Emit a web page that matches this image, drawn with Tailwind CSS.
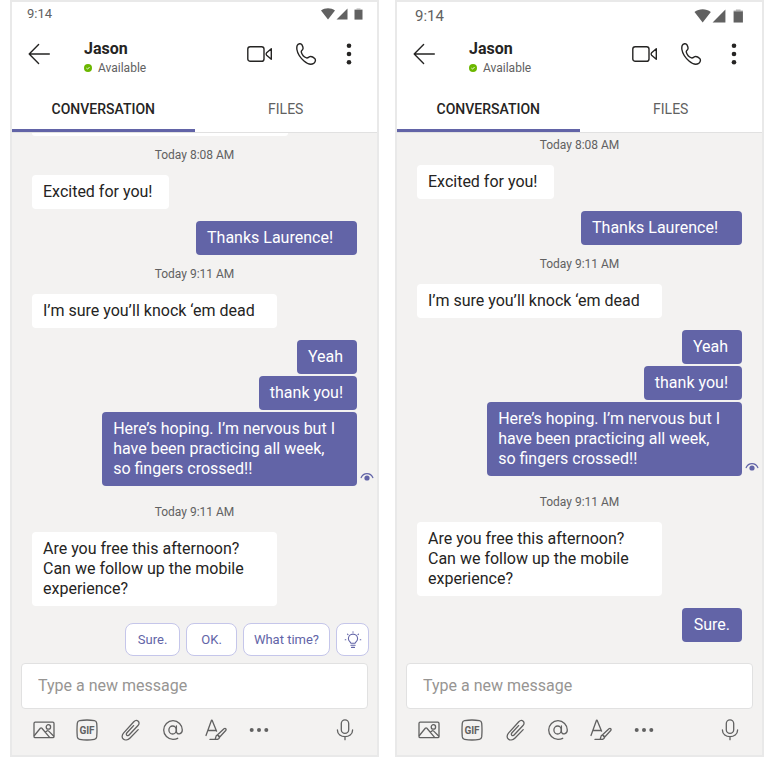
<!DOCTYPE html>
<html lang="en">
  <head>
    <meta charset="UTF-8" />
    <meta name="viewport" content="width=device-width, initial-scale=1" />
    <title>Chat with Jason</title>
    <script src="https://cdn.jsdelivr.net/npm/@tailwindcss/browser@4"></script>
  </head>
  <body class="bg-white font-['Roboto',sans-serif] text-base text-[#252423]">
    <!-- Icons shared by both phones -->
    <svg class="hidden">
      <symbol id="i-status" viewBox="0 0 42 12">
        <path fill="currentColor" d="M0 2.6C4 -.6 10 -.6 14 2.6L7 11.6zM26.5 .4V11.6H15.5z" />
        <path fill="currentColor" d="M33.5 2h8v9.600h-8z" />
        <path fill="currentColor" opacity=".5" d="M33.500 2V1.200h2V.4h4v.8h2V2z" />
      </symbol>
      <symbol id="i-back" viewBox="0 0 22 22" fill="none" stroke="currentColor" stroke-width="1.4" stroke-linecap="round" stroke-linejoin="round">
        <path d="M21.3 11H1.2M10.6 1.6 1.2 11l9.4 9.4" />
      </symbol>
      <symbol id="i-video" viewBox="0 0 26 22" fill="none" stroke="currentColor" stroke-width="1.4" stroke-linejoin="round">
        <rect x=".8" y="3.7" width="16.2" height="14.6" rx="2.4" />
        <path d="M24.3 5.8v10.4L19.6 12.2q-1-1.2 0-2.4z" />
      </symbol>
      <symbol id="i-phone" viewBox="0 0 24 24" fill="none" stroke="currentColor" stroke-width="1.4" stroke-linejoin="round">
        <path d="M4.200 3.600C5 1.600 8 .9 9 2.800c.8 1.500 1.400 3.300.8 4.400-.6 1.200-1.800 1.500-1.500 2.900.6 2.300 3 5 5.200 5.800 1.500.4 2-.8 3.300-1.200 1.700-.5 3.700.7 4.900 1.900 1.400 1.400.5 3.800-1 4.800-2.700 1.700-6.300.6-9.700-2.400C7.300 15.700 4.500 11.200 3.900 7.500c-.2-1.500-.1-2.800.3-3.900z" />
      </symbol>
      <symbol id="i-more-v" viewBox="0 0 24 24" fill="currentColor">
        <circle cx="12" cy="3.700" r="2.300" /><circle cx="12" cy="12" r="2.300" /><circle cx="12" cy="20.300" r="2.300" />
      </symbol>
      <symbol id="i-available" viewBox="0 0 8 8" fill="none">
        <circle cx="4" cy="4" r="4" fill="#6bb700" />
        <path stroke="#fff" stroke-width=".9" d="M2.400 4.100l1.100 1 2.100-2.100" />
      </symbol>
      <symbol id="i-seen" viewBox="0 0 14 10" fill="none">
        <path stroke="currentColor" stroke-width="1.300" stroke-linecap="round" d="M1.200 5.600C3.400.4 10.600.4 12.800 5.600" />
        <circle cx="7" cy="6" r="2.600" fill="currentColor" />
      </symbol>
      <symbol id="i-bulb" viewBox="0 0 18 18" fill="none" stroke="currentColor" stroke-width="1.100" stroke-linecap="round">
        <path d="M7 12.300C6.600 11 4.400 10.200 4.400 7.700a4.600 4.600 0 0 1 9.200 0c0 2.500-2.200 3.300-2.600 4.600zM6.900 14.300h4.200M7.500 16.400h3M9 .8v.4M3.500 3.200l.5.500M14.500 3.200l-.5.500M1.200 8.700h.6M16.200 8.700h.6" />
      </symbol>
      <symbol id="i-image" viewBox="0 0 22 22" fill="none" stroke="currentColor" stroke-width="1.300" stroke-linecap="round">
        <rect x="1" y="3.200" width="20" height="15.400" rx="1.200" />
        <path d="M1.400 16.500 7.300 9.300q.8-.8 1.600 0l7.700 9M12.300 13.300l1.600-1.400q.8-.6 1.600 0l5.100 5.100" />
        <circle cx="15.400" cy="7.900" r="2.200" />
      </symbol>
      <symbol id="i-gif" viewBox="0 0 22 22" fill="none">
        <path stroke="currentColor" stroke-width="1.300" d="M3.600 1.700Q11 .3 18.400 1.700q2 .4 2.300 2.400.6 6.900 0 13.800-.3 2-2.300 2.400-7.400 1.400-14.800 0-2-.4-2.300-2.400-.6-6.900 0-13.800.3-2 2.300-2.400z" />
        <text x="11" y="14.600" text-anchor="middle" fill="currentColor" font-size="10" font-weight="700">GIF</text>
      </symbol>
      <symbol id="i-clip" viewBox="0 0 22 22" fill="none" stroke="currentColor" stroke-width="1.300" stroke-linecap="round">
        <path d="M19.200 10.600 10.800 19.200c-2 2-4.900 2.300-6.500.9-1.700-1.500-1.500-4.200.4-6.200L14.800 2.800c1.400-1.500 3.300-1.600 4.400-.6 1.200 1.100 1.100 2.900-.2 4.300l-8.700 9.300c-.8.9-1.900 1-2.500.4-.7-.6-.6-1.600.2-2.500l6.600-7.100" />
      </symbol>
      <symbol id="i-at" viewBox="0 0 22 22" fill="none" stroke="currentColor" stroke-width="1.300" stroke-linecap="round">
        <ellipse cx="10.600" cy="11" rx="3.700" ry="4" />
        <path d="M14.400 7v5.600c0 3.200 5.900 3.200 5.900-1.600a9.300 9.300 0 1 0-9.300 9.300q2.800 0 4.700-1" />
      </symbol>
      <symbol id="i-format" viewBox="0 0 22 22" fill="none" stroke="currentColor" stroke-width="1.300" stroke-linecap="round" stroke-linejoin="round">
        <path d="M1 16.500 6.500 1.200h.6l4.500 11M3 11.500h7.600" />
        <path d="M12.300 15.900 19 9.700q1.100-.7 1.800.1.600.8-.1 1.700l-6.200 6.700zM12.300 15.900c1.400.2 2.100 1 2.200 2.300-.2 1.800-2.200 2.400-4.300 2.200H5M10.200 20.200c.7-1.200.2-3.800 2.100-4.300" />
      </symbol>
      <symbol id="i-more-h" viewBox="0 0 22 22" fill="currentColor">
        <circle cx="3.700" cy="11" r="2" /><circle cx="11" cy="11" r="2" /><circle cx="18.300" cy="11" r="2" />
      </symbol>
      <symbol id="i-mic" viewBox="0 0 22 22" fill="none" stroke="currentColor" stroke-width="1.300" stroke-linecap="round">
        <rect x="7.300" y=".8" width="7.400" height="13.600" rx="3.700" />
        <path d="M3.400 11c0 8.900 15.200 8.900 15.200 0M11 17.700v3" />
      </symbol>
    </svg>

    <main class="grid min-h-screen grid-cols-2 gap-4 px-2.5 pb-px">
      <!-- Phone 1: suggested replies -->
      <section class="flex flex-col border-2 border-[#e9e9e9] bg-[#f3f2f1]">
        <header class="border-b border-[#e1e1e1] bg-white">
          <div class="flex h-7 items-center justify-between pr-3.5 pb-1 pl-[15px] text-[#616161]">
            <span class="text-[13px]">9:14</span>
            <svg class="h-3 w-[42px]"><use href="#i-status" /></svg>
          </div>
          <div class="flex h-12 items-center px-4">
            <button aria-label="Back"><svg class="size-[22px]"><use href="#i-back" /></svg></button>
            <div class="mt-2 ml-[34px] flex-1">
              <h1 class="leading-5 font-bold">Jason</h1>
              <p class="flex items-center gap-1.5 text-xs leading-[18px] text-[#616161]">
                <svg class="size-2"><use href="#i-available" /></svg>Available
              </p>
            </div>
            <div class="flex items-center gap-5">
              <button aria-label="Video call"><svg class="h-[22px] w-[26px]"><use href="#i-video" /></svg></button>
              <button aria-label="Call"><svg class="size-6"><use href="#i-phone" /></svg></button>
              <button aria-label="More"><svg class="size-6"><use href="#i-more-v" /></svg></button>
            </div>
          </div>
          <nav class="mt-2.5 grid h-11 grid-cols-2 text-sm">
            <button class="border-b-3 border-[#6264a7] font-medium">CONVERSATION</button>
            <button class="border-b-3 border-transparent text-[#616161]">FILES</button>
          </nav>
        </header>

        <div class="flex flex-1 flex-col px-5 leading-5">
          <div class="h-[3px] w-64 rounded-b bg-white"></div>
          <time class="mt-[11px] mb-3 text-center text-xs leading-4 text-[#616161]">Today 8:08 AM</time>
          <p class="self-start rounded bg-white py-[7px] pr-[17px] pl-[11px]">Excited for you!</p>
          <p class="mt-3 self-end rounded bg-[#6264a7] py-[7px] pr-6 pl-[11px] text-white">Thanks Laurence!</p>
          <time class="mt-[11px] mb-3 text-center text-xs leading-4 text-[#616161]">Today 9:11 AM</time>
          <p class="self-start rounded bg-white py-[7px] pr-[22px] pl-[11px]">I’m sure you’ll knock ‘em dead</p>
          <p class="mt-3 self-end rounded bg-[#6264a7] py-[7px] pr-3.5 pl-[11px] text-white">Yeah</p>
          <p class="mt-0.5 self-end rounded bg-[#6264a7] py-[7px] pr-3.5 pl-[11px] text-white">thank you!</p>
          <div class="relative mt-0.5 self-end rounded bg-[#6264a7] py-[7px] pr-[22px] pl-[11px] text-white">
            Here’s hoping. I’m nervous but I<br />have been practicing all week,<br />so fingers crossed!!
            <svg class="absolute -right-[17px] bottom-1 h-2.5 w-3.5 text-[#6264a7]"><use href="#i-seen" /></svg>
          </div>
          <time class="mt-[18px] mb-3 text-center text-xs leading-4 text-[#616161]">Today 9:11 AM</time>
          <p class="self-start rounded bg-white py-[7px] pr-[33px] pl-[11px]">Are you free this afternoon?<br />Can we follow up the mobile<br />experience?</p>
        </div>

        <div class="mt-[17px] flex justify-end gap-1.5 px-2 text-[13px] text-[#6264a7]">
          <button class="h-[33px] rounded-lg border border-[#c5c6ea] bg-white px-3">Sure.</button>
          <button class="h-[33px] rounded-lg border border-[#c5c6ea] bg-white px-3.5">OK.</button>
          <button class="h-[33px] rounded-lg border border-[#c5c6ea] bg-white px-2.5">What time?</button>
          <button aria-label="Suggestions" class="flex h-[33px] w-[33px] items-center justify-center rounded-lg border border-[#c5c6ea] bg-white">
            <svg class="size-[18px]"><use href="#i-bulb" /></svg>
          </button>
        </div>

        <footer class="mt-[7px] px-[9px]">
          <input type="text" aria-label="Message" placeholder="Type a new message" class="h-[46px] w-full rounded border border-[#e1e1e1] bg-white px-4 pb-0.5 placeholder:text-[#979593]" />
          <div class="flex h-[46px] items-center gap-[21px] pr-3 pb-1 pl-3 text-[#616161]">
            <button aria-label="Image"><svg class="size-[22px]"><use href="#i-image" /></svg></button>
            <button aria-label="GIF"><svg class="size-[22px]"><use href="#i-gif" /></svg></button>
            <button aria-label="Attach"><svg class="size-[22px]"><use href="#i-clip" /></svg></button>
            <button aria-label="Mention"><svg class="size-[22px]"><use href="#i-at" /></svg></button>
            <button aria-label="Format"><svg class="size-[22px]"><use href="#i-format" /></svg></button>
            <button aria-label="More options"><svg class="size-[22px]"><use href="#i-more-h" /></svg></button>
            <button aria-label="Record" class="ml-auto"><svg class="size-[22px]"><use href="#i-mic" /></svg></button>
          </div>
        </footer>
      </section>

      <!-- Phone 2: reply sent -->
      <section class="flex flex-col border-2 border-[#e9e9e9] bg-[#f3f2f1]">
        <header class="border-b border-[#e1e1e1] bg-white">
          <div class="flex h-7 items-center justify-between pr-[18px] pl-[18px] text-[#616161]">
            <span class="text-[15px]">9:14</span>
            <svg class="h-3.5 w-[50px]"><use href="#i-status" /></svg>
          </div>
          <div class="flex h-12 items-center px-4">
            <button aria-label="Back"><svg class="size-[22px]"><use href="#i-back" /></svg></button>
            <div class="mt-2 ml-[34px] flex-1">
              <h1 class="leading-5 font-bold">Jason</h1>
              <p class="flex items-center gap-1.5 text-xs leading-[18px] text-[#616161]">
                <svg class="size-2"><use href="#i-available" /></svg>Available
              </p>
            </div>
            <div class="flex items-center gap-5">
              <button aria-label="Video call"><svg class="h-[22px] w-[26px]"><use href="#i-video" /></svg></button>
              <button aria-label="Call"><svg class="size-6"><use href="#i-phone" /></svg></button>
              <button aria-label="More"><svg class="size-6"><use href="#i-more-v" /></svg></button>
            </div>
          </div>
          <nav class="mt-2.5 grid h-11 grid-cols-2 text-sm">
            <button class="border-b-3 border-[#6264a7] font-medium">CONVERSATION</button>
            <button class="border-b-3 border-transparent text-[#616161]">FILES</button>
          </nav>
        </header>

        <div class="flex flex-1 flex-col px-5 leading-5">
          <time class="mt-1 mb-3 text-center text-xs leading-4 text-[#616161]">Today 8:08 AM</time>
          <p class="self-start rounded bg-white py-[7px] pr-[17px] pl-[11px]">Excited for you!</p>
          <p class="mt-3 self-end rounded bg-[#6264a7] py-[7px] pr-6 pl-[11px] text-white">Thanks Laurence!</p>
          <time class="mt-[11px] mb-3 text-center text-xs leading-4 text-[#616161]">Today 9:11 AM</time>
          <p class="self-start rounded bg-white py-[7px] pr-[22px] pl-[11px]">I’m sure you’ll knock ‘em dead</p>
          <p class="mt-3 self-end rounded bg-[#6264a7] py-[7px] pr-3.5 pl-[11px] text-white">Yeah</p>
          <p class="mt-0.5 self-end rounded bg-[#6264a7] py-[7px] pr-3.5 pl-[11px] text-white">thank you!</p>
          <div class="relative mt-0.5 self-end rounded bg-[#6264a7] py-[7px] pr-[22px] pl-[11px] text-white">
            Here’s hoping. I’m nervous but I<br />have been practicing all week,<br />so fingers crossed!!
            <svg class="absolute -right-[17px] bottom-1 h-2.5 w-3.5 text-[#6264a7]"><use href="#i-seen" /></svg>
          </div>
          <time class="mt-[18px] mb-3 text-center text-xs leading-4 text-[#616161]">Today 9:11 AM</time>
          <p class="self-start rounded bg-white py-[7px] pr-[33px] pl-[11px]">Are you free this afternoon?<br />Can we follow up the mobile<br />experience?</p>
          <p class="mt-3 self-end rounded bg-[#6264a7] px-3 py-[7px] text-white">Sure.</p>
        </div>

        <footer class="mt-[7px] px-[9px]">
          <input type="text" aria-label="Message" placeholder="Type a new message" class="h-[46px] w-full rounded border border-[#e1e1e1] bg-white px-4 pb-0.5 placeholder:text-[#979593]" />
          <div class="flex h-[46px] items-center gap-[21px] pr-3 pb-1 pl-3 text-[#616161]">
            <button aria-label="Image"><svg class="size-[22px]"><use href="#i-image" /></svg></button>
            <button aria-label="GIF"><svg class="size-[22px]"><use href="#i-gif" /></svg></button>
            <button aria-label="Attach"><svg class="size-[22px]"><use href="#i-clip" /></svg></button>
            <button aria-label="Mention"><svg class="size-[22px]"><use href="#i-at" /></svg></button>
            <button aria-label="Format"><svg class="size-[22px]"><use href="#i-format" /></svg></button>
            <button aria-label="More options"><svg class="size-[22px]"><use href="#i-more-h" /></svg></button>
            <button aria-label="Record" class="ml-auto"><svg class="size-[22px]"><use href="#i-mic" /></svg></button>
          </div>
        </footer>
      </section>
    </main>
  </body>
</html>
